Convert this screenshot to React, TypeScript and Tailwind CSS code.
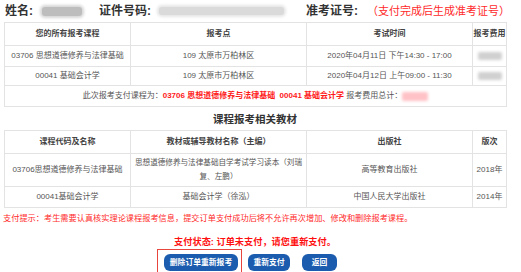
const font = { fontFamily: '"Liberation Sans","Noto Sans CJK SC",sans-serif' };

const cell = "border border-[#e3e3e3] text-center align-middle text-[8px] text-[#555] px-0 leading-[12px]";
const head = "border border-[#e3e3e3] text-center align-middle text-[8px] font-bold text-[#444] leading-[12px]";

export default function App() {
  return (
    <div className="w-[521px] h-[272px] overflow-hidden bg-white" style={font}>
      <div className="flex items-center h-[22px] pl-[5px] text-[12px] font-bold text-[#333] whitespace-nowrap">
        <span className="shrink-0">姓名:</span>
        <span className="ml-[9px] shrink-0 inline-block w-[40px] h-[9px] rounded-[3px] bg-[#bdbdbd] shadow-[0_0_3px_2px_#d6d6d6]" />
        <span className="ml-[17px] shrink-0">证件号码:</span>
        <span className="ml-[8px] shrink-0 inline-block w-[125px] h-[8px] rounded-[3px] bg-[#dadada] shadow-[0_0_3px_2px_#e6e6e6]" />
        <span className="ml-[22px] shrink-0">准考证号:</span>
        <span className="ml-[9px] shrink-0 text-[11px] font-normal text-[#ff2a2a]">（支付完成后生成准考证号）</span>
      </div>

      <table className="ml-[4px] w-[502px] table-fixed border-collapse">
        <colgroup>
          <col className="w-[126px]" />
          <col className="w-[176px]" />
          <col className="w-[166px]" />
          <col className="w-[34px]" />
        </colgroup>
        <tbody>
          <tr className="h-[23px]">
            <td className={head}>您的所有报考课程</td>
            <td className={head}>报考点</td>
            <td className={head}>考试时间</td>
            <td className={head}>报考费用</td>
          </tr>
          <tr className="h-[21px]">
            <td className={cell}>03706 思想道德修养与法律基础</td>
            <td className={cell}>109 太原市万柏林区</td>
            <td className={cell}>2020年04月11日 下午14:30 - 17:00</td>
            <td className={cell}>
              <div className="mx-auto w-[24px] h-[8px] rounded-[2px] bg-[#d0d0d0] blur-[1.5px]" />
            </td>
          </tr>
          <tr className="h-[19px]">
            <td className={cell}>00041 基础会计学</td>
            <td className={cell}>109 太原市万柏林区</td>
            <td className={cell}>2020年04月12日 上午09:00 - 11:30</td>
            <td className={cell}>
              <div className="mx-auto w-[24px] h-[8px] rounded-[2px] bg-[#d0d0d0] blur-[1.5px]" />
            </td>
          </tr>
          <tr className="h-[21px]">
            <td colSpan={4} className={cell}>
              <div className="flex items-center justify-center">
                <span>此次报考支付课程为：</span>
                <span className="font-bold text-[#ff1a1a]">03706 思想道德修养与法律基础&nbsp;&nbsp;00041 基础会计学</span>
                <span>&nbsp;报考费用总计：</span>
                <div className="w-[26px] h-[9px] rounded-[2px] bg-[#ffc2c6] blur-[1.5px]" />
              </div>
            </td>
          </tr>
        </tbody>
      </table>

      <div className="h-[23px] pt-[2px] flex items-center justify-center ml-[4px] w-[502px] text-[10.5px] font-bold text-[#333]">
        课程报考相关教材
      </div>

      <table className="ml-[4px] w-[502px] table-fixed border-collapse">
        <colgroup>
          <col className="w-[126px]" />
          <col className="w-[176px]" />
          <col className="w-[166px]" />
          <col className="w-[34px]" />
        </colgroup>
        <tbody>
          <tr className="h-[23px]">
            <td className={head}>课程代码及名称</td>
            <td className={head}>教材或辅导教材名称（主编）</td>
            <td className={head}>出版社</td>
            <td className={head}>版次</td>
          </tr>
          <tr className="h-[33px]">
            <td className={cell}>03706思想道德修养与法律基础</td>
            <td className="border border-[#e3e3e3] text-center align-middle text-[7.6px] text-[#555] px-0 leading-[14px]">
              思想道德修养与法律基础自学考试学习读本（刘瑞<br />复、左鹏）
            </td>
            <td className={cell}>高等教育出版社</td>
            <td className={cell}>2018年</td>
          </tr>
          <tr className="h-[21px]">
            <td className={cell}>00041基础会计学</td>
            <td className={cell}>基础会计学（徐泓）</td>
            <td className={cell}>中国人民大学出版社</td>
            <td className={cell}>2014年</td>
          </tr>
        </tbody>
      </table>

      <div className="mt-[5px] h-[12px] pl-[3px] text-[8.2px] leading-[12px] text-[#ff2a2a] whitespace-nowrap">
        支付提示：考生需要认真核实理论课程报考信息，提交订单支付成功后将不允许再次增加、修改和删除报考课程。
      </div>

      <div className="mt-[10px] h-[14px] ml-[4px] w-[502px] text-center text-[9.2px] leading-[14px] font-bold text-[#ff1010] whitespace-nowrap">
        支付状态: 订单未支付，请您重新支付。
      </div>

      <div className="flex items-start ml-[157px]">
        <div className="border border-[#e8453c] pl-[6px] pr-[3px] pt-[4px] pb-[6px]">
          <div className="h-[17px] w-[74px] rounded-[6px] bg-[#1b5cae] flex items-center justify-center text-[7.8px] font-bold text-white">删除订单重新报考</div>
        </div>
        <div className="ml-[6px] mt-[5px] h-[17px] w-[42px] rounded-[6px] bg-[#1b5cae] flex items-center justify-center text-[7.8px] font-bold text-white">重新支付</div>
        <div className="ml-[12px] mt-[5px] h-[17px] w-[35px] rounded-[6px] bg-[#1b5cae] flex items-center justify-center text-[7.8px] font-bold text-white">返回</div>
      </div>
    </div>
  );
}
